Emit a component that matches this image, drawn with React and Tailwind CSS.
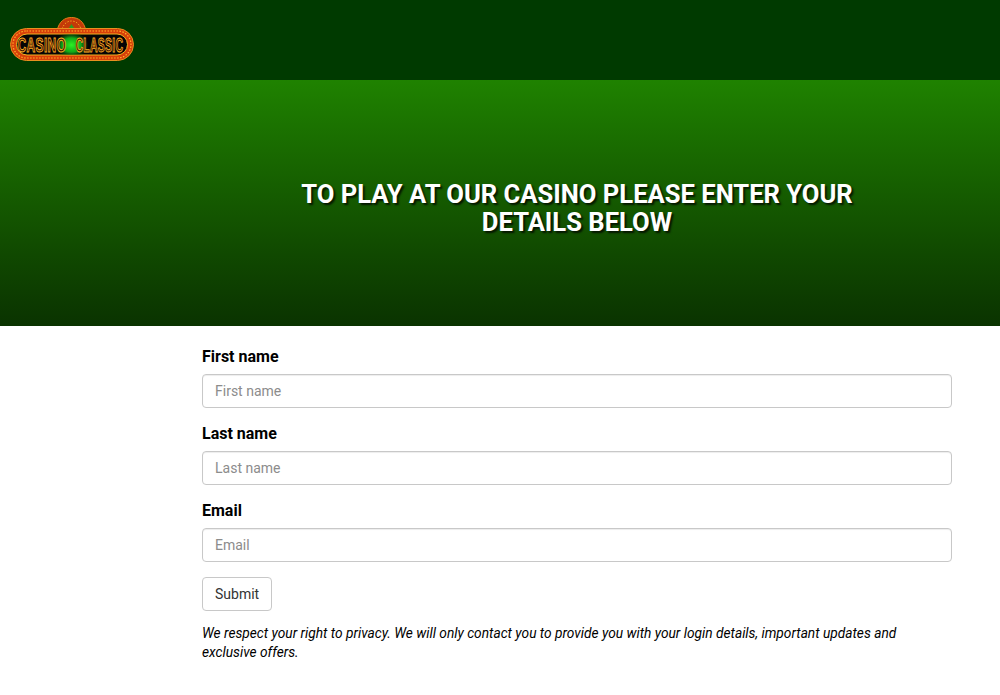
export default function App() {
  const font = { fontFamily: 'Roboto, sans-serif' };
  const Field = ({ label }) => (
    <div className="mb-[14px]">
      <label className="block text-[16px] leading-[24px] font-bold text-black mb-[5px]">{label}</label>
      <input
        placeholder={label}
        className="block w-full h-[34px] px-[12px] text-[14px] bg-white border border-[#c8c8c8] rounded-[4px] shadow-[inset_0_1px_1px_rgba(0,0,0,0.075)] placeholder:text-[#8c8c8c] outline-none"
      />
    </div>
  );
  const logoText = {
    fontFamily: 'Liberation Sans, sans-serif',
    fontWeight: 700,
    fontSize: 20,
    fill: '#3a1400',
    stroke: '#ffae24',
    strokeWidth: 1,
    letterSpacing: 0.6,
  };
  return (
    <div className="w-[1000px] h-[695px] bg-white overflow-hidden font-['Roboto',sans-serif]">
      <header className="h-[80px] bg-[#003a00] flex items-start pl-[10px] pt-[17px]">
        <svg width="124" height="46" viewBox="0 0 124 46">
          <defs>
            <radialGradient id="g" cx="50%" cy="50%" r="50%">
              <stop offset="0%" stopColor="#2cf024" />
              <stop offset="55%" stopColor="#12a818" />
              <stop offset="100%" stopColor="#0a5a0c" stopOpacity="0" />
            </radialGradient>
            <clipPath id="bar"><rect x="6.500" y="17" width="111" height="21" rx="10.500" /></clipPath>
          </defs>
          <path d="M47 14 C49 4 55 0.500 61.500 0.500 C68 0.500 74 4 76 14 Z" fill="#c43a08" stroke="#e8801a" strokeWidth="1" />
          <path d="M52 12 C54 6 58 4 61.500 4 C65 4 69 6 71 12" fill="none" stroke="#f0a020" strokeWidth="1" strokeDasharray="1.500 1.500" />
          <path d="M61.500 7 l3.500 5.500 h-7 z" fill="#2aa020" />
          <rect x="0.500" y="11.500" width="123" height="32" rx="16" fill="#d8400a" stroke="#e89020" strokeWidth="1" />
          <rect x="3" y="14" width="118" height="27" rx="13.500" fill="none" stroke="#ffb428" strokeWidth="1.200" strokeDasharray="1.500 1.500" />
          <rect x="6.500" y="17" width="111" height="21" rx="10.500" fill="#050505" stroke="#f4b020" strokeWidth="1" />
          <g clipPath="url(#bar)"><ellipse cx="61.500" cy="28" rx="17" ry="13" fill="url(#g)" /></g>
          <text transform="translate(7.500 35) scale(0.6 1)" style={logoText}>CASINO</text>
          <text transform="translate(65.500 35) scale(0.52 1)" style={logoText}>CLASSIC</text>
        </svg>
      </header>
      <section className="h-[246px] bg-gradient-to-b from-[#1f8200] to-[#0a3300] flex justify-center pl-[154px] pt-[100px]">
        <h1 style={font} className="w-[600px] text-center text-[25.600px] leading-[28px] font-bold text-white [text-shadow:2px_2px_2px_rgba(0,0,0,0.75)] m-0">
          TO PLAY AT OUR CASINO PLEASE ENTER YOUR DETAILS BELOW
        </h1>
      </section>
      <main className="ml-[202px] w-[750px] pt-[19px]">
        <Field label="First name" />
        <Field label="Last name" />
        <Field label="Email" />
        <button className="block mt-[15px] h-[34px] px-[12px] text-[14px] text-[#333] bg-white border border-[#c8c8c8] rounded-[4px]">Submit</button>
        <p className="mt-[13px] text-[13.720px] leading-[19px] italic text-black">
          We respect your right to privacy. We will only contact you to provide you with your login details, important updates and exclusive offers.
        </p>
      </main>
    </div>
  );
}
